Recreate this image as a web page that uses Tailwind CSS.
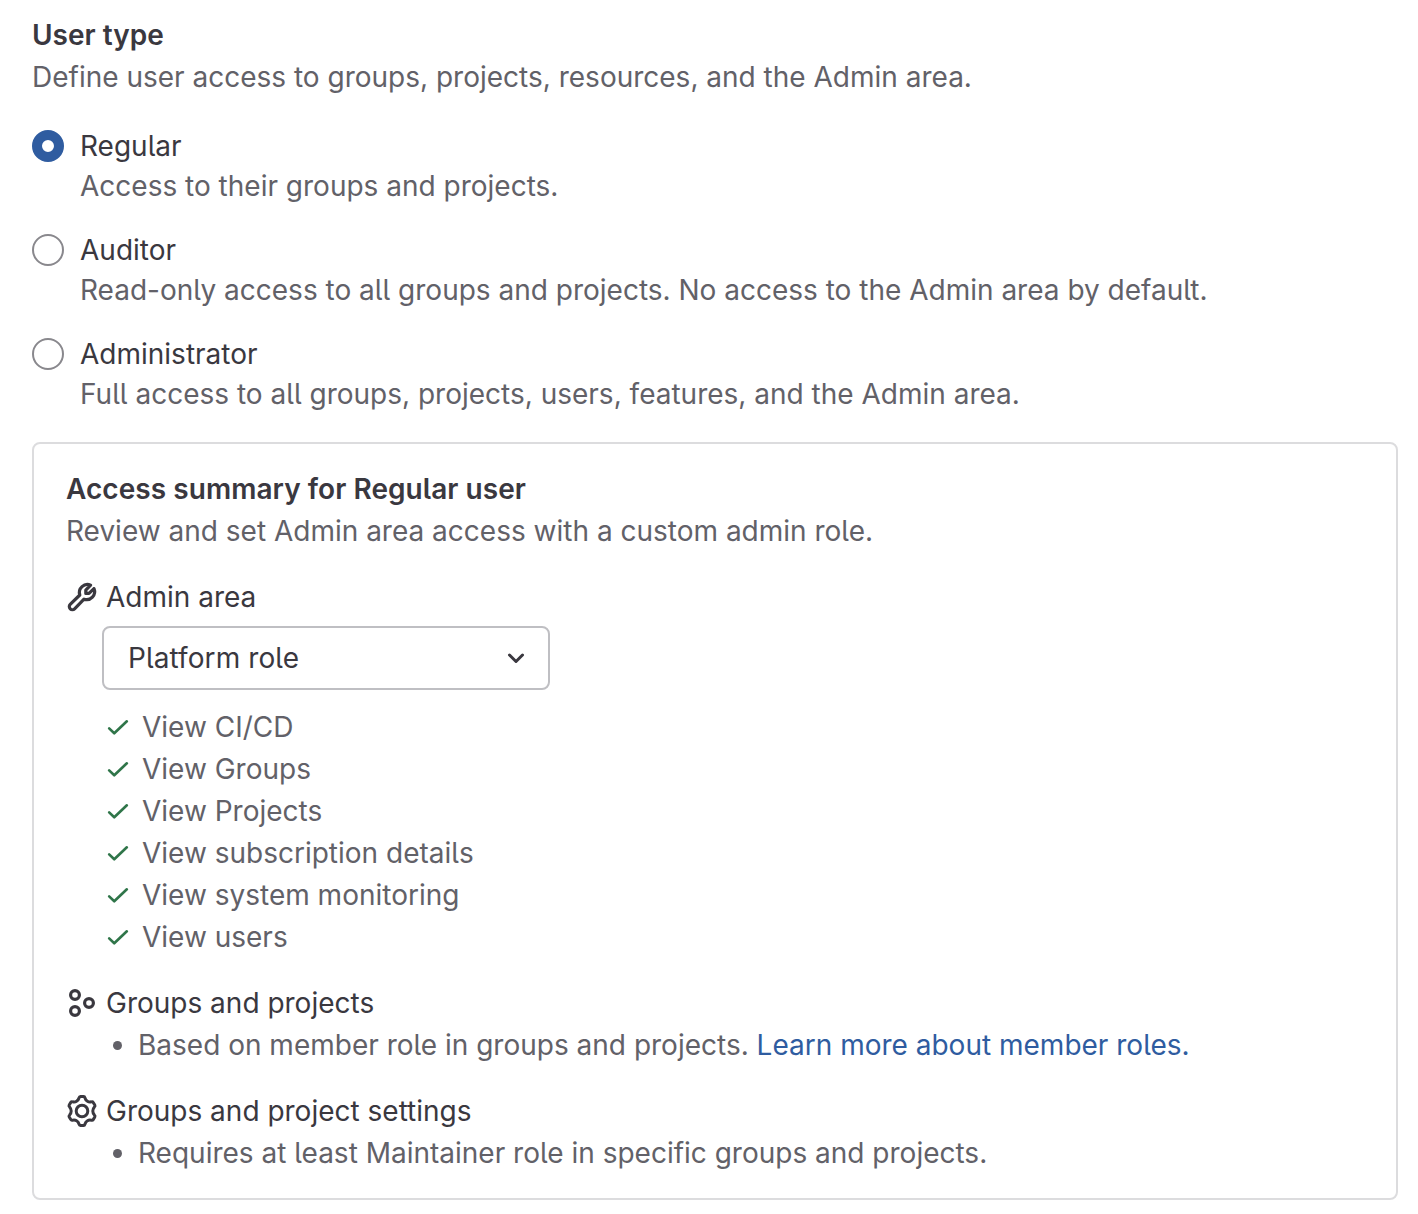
<!DOCTYPE html>
<html lang="en">
<head>
  <meta charset="UTF-8" />
  <meta name="viewport" content="width=device-width, initial-scale=1.0">
  <title>User type</title>
  <script src="https://cdn.jsdelivr.net/npm/@tailwindcss/browser@4"></script>
</head>
<body class="bg-white font-['Inter',sans-serif] [font-feature-settings:'cv05'] text-[28px] leading-[42px] text-[#626168]">

  <!-- shared icons -->
  <svg class="hidden">
    <symbol id="check" viewBox="0 0 16 16">
      <path d="M2.1 8.9l3.4 3.3L13.9 4.2" fill="none" stroke="currentColor" stroke-width="1.75" stroke-linecap="round" stroke-linejoin="round" />
    </symbol>
  </svg>

  <main class="pt-[14px] pl-8 pr-5">
    <h2 class="font-semibold text-[#3a383f]">User type</h2>
    <p>Define user access to groups, projects, resources, and the Admin area.</p>

    <div class="mt-7 space-y-6 leading-10">
      <label class="flex gap-4">
        <span class="mt-1 size-8 shrink-0 rounded-full border-[10px] border-[#2f5ca0]"></span>
        <span>
          <span class="block text-[#3a383f]">Regular</span>
          <span class="block">Access to their groups and projects.</span>
        </span>
      </label>
      <label class="flex gap-4">
        <span class="mt-1 size-8 shrink-0 rounded-full border-2 border-[#89888d]"></span>
        <span>
          <span class="block text-[#3a383f]">Auditor</span>
          <span class="block">Read-only access to all groups and projects. No access to the Admin area by default.</span>
        </span>
      </label>
      <label class="flex gap-4">
        <span class="mt-1 size-8 shrink-0 rounded-full border-2 border-[#89888d]"></span>
        <span>
          <span class="block text-[#3a383f]">Administrator</span>
          <span class="block">Full access to all groups, projects, users, features, and the Admin area.</span>
        </span>
      </label>
    </div>

    <section class="mt-7 rounded-lg border-2 border-[#dcdcde] px-8 py-6">
      <h3 class="font-semibold tracking-[0.05px] text-[#3a383f]">Access summary for Regular user</h3>
      <p>Review and set Admin area access with a custom admin role.</p>

      <div class="mt-6 flex items-center gap-2 text-[#3a383f]">
        <svg class="size-8" viewBox="0 0 16 16" fill="none" stroke="currentColor" stroke-width="1.6" stroke-linejoin="round">
          <path d="M12.3 2.1 A4 4 0 0 0 6.9 7 L2.1 11.7 A1.5 1.5 0 0 0 4.3 13.9 L9 9.1 A4 4 0 0 0 14 3.8 L11.5 6.2 L9.9 6.2 L9.9 4.6 Z" />
        </svg>
        <span>Admin area</span>
      </div>
      <button class="mt-2 ml-9 flex h-16 w-[448px] items-center justify-between rounded-lg border-2 border-[#bfbfc3] pr-4 pl-6 text-[#3a383f]">
        <span class="tracking-[0.08px]">Platform role</span>
        <svg class="size-8" viewBox="0 0 16 16" fill="none" stroke="currentColor" stroke-width="1.5" stroke-linecap="round" stroke-linejoin="round">
          <path d="M4.75 6.5 8 9.75l3.25-3.25" />
        </svg>
      </button>

      <ul class="mt-4 ml-10">
        <li class="flex items-center gap-3"><svg class="size-6 text-[#2f7549]"><use href="#check" /></svg>View CI/CD</li>
        <li class="flex items-center gap-3"><svg class="size-6 text-[#2f7549]"><use href="#check" /></svg>View Groups</li>
        <li class="flex items-center gap-3"><svg class="size-6 text-[#2f7549]"><use href="#check" /></svg>View Projects</li>
        <li class="flex items-center gap-3"><svg class="size-6 text-[#2f7549]"><use href="#check" /></svg>View subscription details</li>
        <li class="flex items-center gap-3"><svg class="size-6 text-[#2f7549]"><use href="#check" /></svg>View system monitoring</li>
        <li class="flex items-center gap-3"><svg class="size-6 text-[#2f7549]"><use href="#check" /></svg>View users</li>
      </ul>

      <div class="mt-6 flex items-center gap-2 text-[#3a383f]">
        <svg class="size-8" viewBox="0 0 16 16" fill="none" stroke="currentColor" stroke-width="1.6">
          <circle cx="4.5" cy="4" r="2.2" />
          <circle cx="4.5" cy="12" r="2.2" />
          <circle cx="11.5" cy="8" r="2.2" />
        </svg>
        <span>Groups and projects</span>
      </div>
      <div class="ml-[47px] flex items-center gap-4">
        <span class="size-[9px] rounded-full bg-[#626168]"></span>
        <p>Based on member role in groups and projects. <a href="#" class="text-[#2f5ca0]">Learn more about member roles.</a></p>
      </div>

      <div class="mt-6 flex items-center gap-2 text-[#3a383f]">
        <svg class="size-8" viewBox="0 0 16 16" fill="none" stroke="currentColor" stroke-width="1.5" stroke-linejoin="round">
          <path d="M7.2 .8 H8.8 Q9.3 .8 9.5 1.5 Q9.8 2.6 10.7 3.1 Q11.6 3.7 12.7 3.4 Q13.3 3.2 13.6 3.7 L14.4 5 Q14.7 5.5 14.2 6 Q13.4 6.9 13.4 8 Q13.4 9.1 14.2 10 Q14.7 10.5 14.4 11 L13.6 12.3 Q13.3 12.8 12.7 12.6 Q11.6 12.3 10.7 12.9 Q9.8 13.4 9.5 14.5 Q9.3 15.2 8.8 15.2 H7.2 Q6.7 15.2 6.5 14.5 Q6.2 13.4 5.3 12.9 Q4.4 12.3 3.3 12.6 Q2.7 12.8 2.4 12.3 L1.6 11 Q1.3 10.5 1.8 10 Q2.6 9.1 2.6 8 Q2.6 6.9 1.8 6 Q1.3 5.5 1.6 5 L2.4 3.7 Q2.7 3.2 3.3 3.4 Q4.4 3.7 5.3 3.1 Q6.2 2.6 6.5 1.5 Q6.7 .8 7.2 .8 Z" />
          <circle cx="8" cy="8" r="2.9" />
        </svg>
        <span>Groups and project settings</span>
      </div>
      <div class="ml-[47px] flex items-center gap-4">
        <span class="size-[9px] rounded-full bg-[#626168]"></span>
        <p>Requires at least Maintainer role in specific groups and projects.</p>
      </div>
    </section>
  </main>

</body>
</html>
